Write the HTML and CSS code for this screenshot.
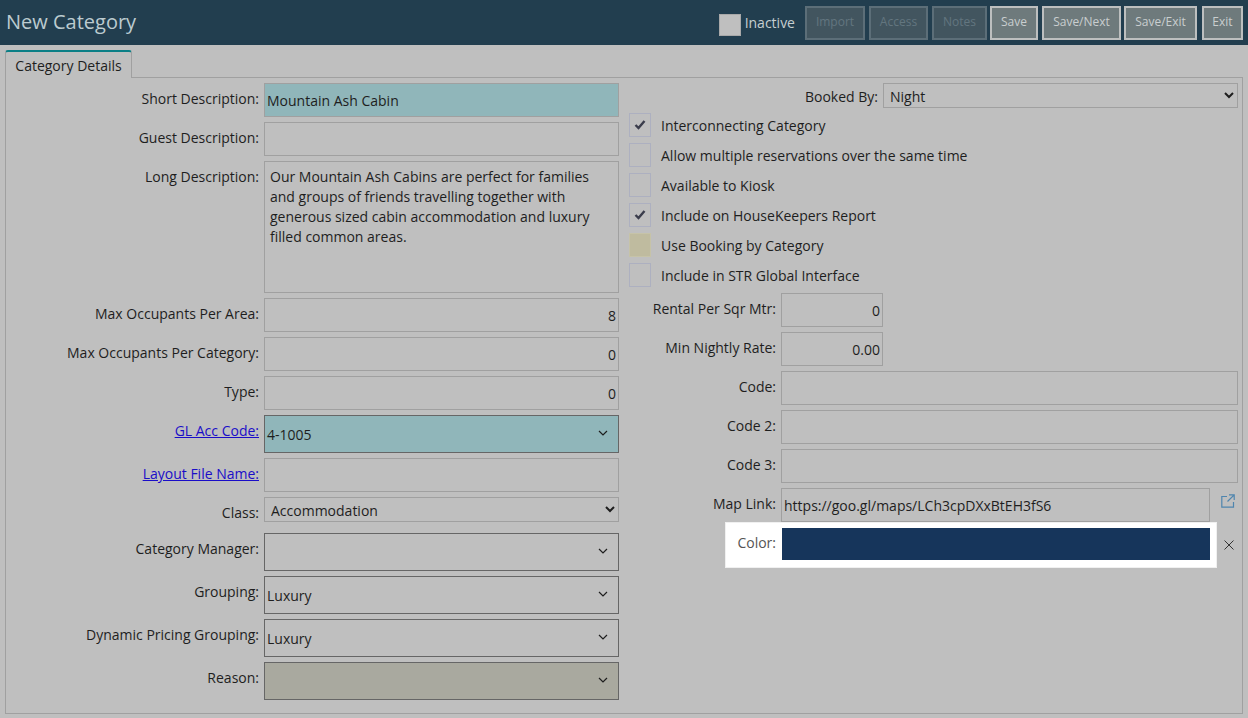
FILE: index.html
```html
<!DOCTYPE html>
<html>
<head>
    <title>New Category</title>
    <link rel="stylesheet" href="styles.css">
</head>
<body>
    <div id="header">
        <div class="page-title">New Category</div>
        <div class="toolbar">
            <span class="inactive-box"></span>
            <span class="inactive-label">Inactive</span>
            <button class="tool-btn disabled w-import">Import</button>
            <button class="tool-btn disabled w-access">Access</button>
            <button class="tool-btn disabled w-notes">Notes</button>
            <button class="tool-btn w-save">Save</button>
            <button class="tool-btn w-next">Save/Next</button>
            <button class="tool-btn w-exit">Save/Exit</button>
            <button class="tool-btn w-close">Exit</button>
        </div>
    </div>

    <div id="tabs">
        <div class="tab">Category Details</div>
    </div>

    <div id="panel">
        <div class="col-left">
            <div class="row">
                <label class="lbl">Short Description:</label>
                <input class="field required" value="Mountain Ash Cabin">
            </div>
            <div class="row">
                <label class="lbl">Guest Description:</label>
                <input class="field">
            </div>
            <div class="row">
                <label class="lbl">Long Description:</label>
                <textarea class="field long">Our Mountain Ash Cabins are perfect for families and groups of friends travelling together with generous sized cabin accommodation and luxury filled common areas.</textarea>
            </div>
            <div class="row">
                <label class="lbl">Max Occupants Per Area:</label>
                <input class="field num" value="8">
            </div>
            <div class="row">
                <label class="lbl">Max Occupants Per Category:</label>
                <input class="field num" value="0">
            </div>
            <div class="row">
                <label class="lbl">Type:</label>
                <input class="field num" value="0">
            </div>
            <div class="row">
                <label class="lbl"><a href="#">GL Acc Code:</a></label>
                <div class="combo required"><span class="combo-text">4-1005</span>
                    <svg class="chev" viewBox="0 0 10 6"><path d="M1 1l4 4 4-4"/></svg></div>
            </div>
            <div class="row">
                <label class="lbl"><a href="#">Layout File Name:</a></label>
                <input class="field">
            </div>
            <div class="row row-class">
                <label class="lbl">Class:</label>
                <select class="native"><option>Accommodation</option></select>
            </div>
            <div class="row">
                <label class="lbl">Category Manager:</label>
                <div class="combo"><span class="combo-text"></span>
                    <svg class="chev" viewBox="0 0 10 6"><path d="M1 1l4 4 4-4"/></svg></div>
            </div>
            <div class="row">
                <label class="lbl">Grouping:</label>
                <div class="combo"><span class="combo-text">Luxury</span>
                    <svg class="chev" viewBox="0 0 10 6"><path d="M1 1l4 4 4-4"/></svg></div>
            </div>
            <div class="row">
                <label class="lbl">Dynamic Pricing Grouping:</label>
                <div class="combo"><span class="combo-text">Luxury</span>
                    <svg class="chev" viewBox="0 0 10 6"><path d="M1 1l4 4 4-4"/></svg></div>
            </div>
            <div class="row">
                <label class="lbl">Reason:</label>
                <div class="combo locked"><span class="combo-text"></span>
                    <svg class="chev" viewBox="0 0 10 6"><path d="M1 1l4 4 4-4"/></svg></div>
            </div>
        </div>

        <div class="col-right">
            <div class="row">
                <label class="lbl lbl-booked">Booked By:</label>
                <select class="native"><option>Night</option></select>
            </div>
            <div class="check-row">
                <span class="check"><svg viewBox="0 0 12 10"><path d="M1.5 5l3 3 6-7"/></svg></span>
                <span>Interconnecting Category</span>
            </div>
            <div class="check-row">
                <span class="check"></span>
                <span>Allow multiple reservations over the same time</span>
            </div>
            <div class="check-row">
                <span class="check"></span>
                <span>Available to Kiosk</span>
            </div>
            <div class="check-row">
                <span class="check"><svg viewBox="0 0 12 10"><path d="M1.5 5l3 3 6-7"/></svg></span>
                <span>Include on HouseKeepers Report</span>
            </div>
            <div class="check-row">
                <span class="check warn"></span>
                <span>Use Booking by Category</span>
            </div>
            <div class="check-row">
                <span class="check"></span>
                <span>Include in STR Global Interface</span>
            </div>
            <div class="row">
                <label class="lbl lbl-right">Rental Per Sqr Mtr:</label>
                <input class="field num short" value="0">
            </div>
            <div class="row">
                <label class="lbl lbl-right">Min Nightly Rate:</label>
                <input class="field num short" value="0.00">
            </div>
            <div class="row">
                <label class="lbl lbl-right">Code:</label>
                <input class="field">
            </div>
            <div class="row">
                <label class="lbl lbl-right">Code 2:</label>
                <input class="field">
            </div>
            <div class="row">
                <label class="lbl lbl-right">Code 3:</label>
                <input class="field">
            </div>
            <div class="row row-map">
                <label class="lbl lbl-right">Map Link:</label>
                <input class="field" value="https://goo.gl/maps/LCh3cpDXxBtEH3fS6">
                <svg class="link-icon" viewBox="0 0 14 14"><path d="M12.5 8v5.2H.8V2.5H6M8 .8h5.2V6M13.2 .8L6.5 7.5"/></svg>
            </div>
            <div class="color-row">
                <div class="spot">
                    <label class="lbl lbl-color">Color:</label>
                    <div class="swatch"></div>
                </div>
                <svg class="clear-icon" viewBox="0 0 10 10"><path d="M.5 .5l9 9M9.5 .5l-9 9"/></svg>
            </div>
        </div>
    </div>
</body>
</html>
```
FILE: styles.css
```css
* {
    margin: 0;
    padding: 0;
    box-sizing: border-box;
}

body {
    background: #bfbfbf;
    font-family: "Open Sans", sans-serif;
    font-size: 14px;
    color: #1e1e1e;
    overflow: hidden;
}

#header {
    height: 45px;
    background: #223e4f;
    display: flex;
    justify-content: space-between;
    padding: 0 5px 0 6px;
}

.page-title {
    font-size: 20px;
    line-height: 44px;
    color: #bccbd0;
}

.toolbar {
    display: flex;
    align-items: flex-start;
    padding-top: 6px;
    gap: 4px;
}

.inactive-box {
    width: 22px;
    height: 22px;
    margin-top: 8px;
    background: #bfbfbf;
    border: 1px solid #a9a9a9;
}

.inactive-label {
    color: #c6ced1;
    line-height: 34px;
    margin-right: 6px;
}

.tool-btn {
    height: 34px;
    background: #6e7a7c;
    border: 2px solid #bdbfbf;
    color: #c9cecf;
    font-family: "Open Sans", sans-serif;
    font-size: 12px;
    padding-bottom: 3px;
}

.tool-btn.disabled {
    background: #42555f;
    border-color: #5c6e78;
    color: #63767f;
}

.w-import { width: 60px; }
.w-access { width: 59px; }
.w-notes { width: 55px; margin-right: -1px; }
.w-save { width: 48px; }
.w-next { width: 79px; }
.w-exit { width: 73px; margin: 0 1px 0 -1px; }
.w-close { width: 41px; }

#tabs {
    height: 32px;
    padding: 5px 0 0 5px;
}

.tab {
    width: 127px;
    height: 28px;
    border: 1px solid #a0a0a0;
    border-top: 2px solid #0b7f86;
    border-bottom: none;
    border-radius: 3px 3px 0 0;
    background: #bfbfbf;
    text-align: center;
    line-height: 28px;
    position: relative;
    z-index: 1;
}

#panel {
    height: 637px;
    margin: 0 5px;
    border: 1px solid #a0a0a0;
    padding: 5px 4px 0 0;
    display: flex;
    gap: 10px;
}

.col-left {
    width: 613px;
    flex: none;
}

.col-right {
    flex: 1;
}

.row {
    display: flex;
    gap: 5px;
    margin-bottom: 5px;
}

.lbl {
    width: 253px;
    flex: none;
    text-align: right;
    padding-top: 6px;
}

.lbl a {
    color: #1a0dc8;
}

.lbl-right {
    width: 147px;
}

.field {
    flex: 1;
    min-width: 0;
    height: 34px;
    background: #bfbfbf;
    border: 1px solid #a0a0a0;
    padding: 3px 2px;
    font-family: "Open Sans", sans-serif;
    font-size: 14px;
    color: #1e1e1e;
    outline: none;
}

.field.required {
    background: #90b6ba;
}

.field.long {
    height: 132px;
    padding: 5px;
    line-height: 20px;
    resize: none;
}

.field.num {
    text-align: right;
}

.field.short {
    flex: none;
    width: 102px;
}

.combo {
    flex: 1;
    height: 38px;
    border: 1px solid #666;
    display: flex;
    align-items: center;
    justify-content: space-between;
    padding: 0 10px 0 2px;
}

.combo.required {
    background: #90b6ba;
}

.combo.locked {
    background: #a9a99f;
}

.combo-text {
    padding-top: 1px;
}

.chev {
    width: 10px;
    height: 6px;
    margin-bottom: 2px;
    fill: none;
    stroke: #1e1e1e;
    stroke-width: 1.2;
}

.native {
    flex: 1;
    height: 25px;
    background: #bfbfbf;
    border: 1px solid #a0a0a0;
    padding: 2px 0 0 2px;
    font-family: "Open Sans", sans-serif;
    font-size: 14px;
    color: #1e1e1e;
    outline: none;
}

.row-class {
    margin-bottom: 11px;
}

.lbl-booked {
    width: 249px;
    padding-top: 4px;
}

.check-row {
    display: flex;
    align-items: center;
    gap: 10px;
    height: 24px;
    margin-bottom: 6px;
}

.check {
    width: 22px;
    height: 24px;
    border: 1px solid #adb0c0;
    display: flex;
    align-items: center;
    justify-content: center;
}

.check svg {
    width: 12px;
    height: 10px;
    fill: none;
    stroke: #3b3d4c;
    stroke-width: 2.4;
}

.check.warn {
    background: #bfbb9f;
    border-color: #c6c3a8;
}

.row-map {
    margin-bottom: 0;
}

.row-map .field {
    flex: none;
    width: 429px;
}

.link-icon {
    width: 14px;
    height: 14px;
    margin: 6px 0 0 6px;
    fill: none;
    stroke: #4f85ae;
    stroke-width: 1.2;
}

.color-row {
    display: flex;
    align-items: center;
    margin-left: 96px;
}

.spot {
    width: 492px;
    height: 46px;
    background: #fff;
    border: 1px solid #f0f0f0;
    display: flex;
    align-items: flex-start;
    gap: 6px;
    padding: 5px 6px 0 0;
}

.lbl-color {
    width: 50px;
    padding-top: 5px;
    color: #555;
}

.swatch {
    flex: 1;
    height: 32px;
    background: #16355b;
}

.clear-icon {
    width: 10px;
    height: 10px;
    margin-left: 7px;
    fill: none;
    stroke: #333;
    stroke-width: 1;
}
```
